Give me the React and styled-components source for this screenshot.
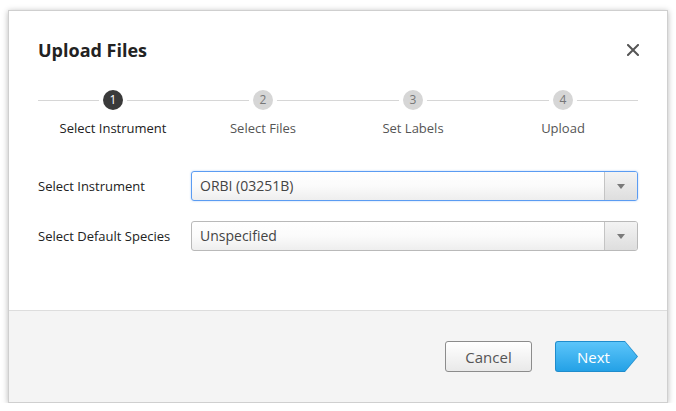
import React from "react";
import styled, { createGlobalStyle } from "styled-components";

const Global = createGlobalStyle`
  html, body { margin: 0; padding: 0; background: #ffffff; }
  body { font-family: "Open Sans", "Noto Sans", sans-serif; color: #333; }
  * { box-sizing: border-box; }
`;

const Modal = styled.div`
  margin: 10px 0 0 8px;
  width: 660px;
  height: 393px;
  background: #fff;
  border: 1px solid #cfcfcf;
  box-shadow: 0 1px 6px rgba(0, 0, 0, 0.28);
  display: flex;
  flex-direction: column;
`;

const Body = styled.div`
  flex: 1;
  padding: 27px 29px 0 29px;
`;

const Header = styled.div`
  display: flex;
  align-items: center;
  justify-content: space-between;
  height: 24px;
`;

const Title = styled.h1`
  margin: 0;
  font-size: 18px;
  line-height: 24px;
  font-weight: 700;
  color: #222;
`;

const Close = styled.button`
  border: 0;
  background: none;
  padding: 0;
  margin-right: -2px;
  width: 14px;
  height: 14px;
  display: flex;
  align-items: center;
  justify-content: center;
  cursor: pointer;
`;

const Steps = styled.div`
  position: relative;
  margin-top: 28px;
  display: grid;
  grid-template-columns: repeat(4, 150px);
  &::before {
    content: "";
    position: absolute;
    left: 0;
    right: 0;
    top: 10px;
    height: 1px;
    background: #d6d6d6;
  }
`;

const Step = styled.div`
  display: flex;
  flex-direction: column;
  align-items: center;
  position: relative;
`;

const Circle = styled.div`
  width: 20px;
  height: 20px;
  border-radius: 50%;
  background: ${(p) => (p.$active ? "#3a3a3a" : "#d6d6d6")};
  color: ${(p) => (p.$active ? "#fff" : "#777")};
  box-shadow: 0 0 0 4px #fff;
  font-size: 12px;
  line-height: 20px;
  text-align: center;
`;

const StepLabel = styled.div`
  margin-top: 9px;
  font-size: 13px;
  line-height: 18px;
  color: ${(p) => (p.$active ? "#222" : "#555")};
`;

const Form = styled.div`
  margin-top: 34px;
  display: flex;
  flex-direction: column;
  gap: 20px;
`;

const Row = styled.div`
  display: grid;
  grid-template-columns: 153px 447px;
  align-items: center;
`;

const Label = styled.label`
  font-size: 13px;
  color: #222;
`;

const Select = styled.div`
  height: 30px;
  border: 1px solid ${(p) => (p.$focus ? "#5b9cf2" : "#b9b9b9")};
  border-radius: 3px;
  background: linear-gradient(#ffffff 0%, #fbfbfb 50%, #eeeeee 100%);
  display: flex;
  align-items: stretch;
  ${(p) => (p.$focus ? "box-shadow: 0 0 2px rgba(91,156,242,0.5);" : "")}
`;

const SelectValue = styled.div`
  flex: 1;
  padding-left: 8px;
  font-size: 14px;
  line-height: 28px;
  color: #444;
`;

const Arrow = styled.div`
  width: 33px;
  border-left: 1px solid #c4c4c4;
  background: linear-gradient(#f3f3f3, #dedede);
  border-radius: 0 2px 2px 0;
  display: flex;
  align-items: center;
  justify-content: center;
`;

const Footer = styled.div`
  height: 92px;
  border-top: 1px solid #dddddd;
  background: #f4f4f4;
  display: flex;
  justify-content: flex-end;
  align-items: flex-start;
  gap: 23px;
  padding: 30px 29px 0 0;
`;

const CancelButton = styled.button`
  width: 87px;
  height: 31px;
  border: 1px solid #8c8c8c;
  border-radius: 3px;
  background: linear-gradient(#ffffff, #e9e9e9);
  font-family: inherit;
  font-size: 15px;
  color: #555;
  padding: 0;
`;

const NextOuter = styled.button`
  width: 83px;
  height: 31px;
  padding: 1px;
  border: 0;
  border-radius: 3px 0 0 3px;
  background: #1f8ccc;
  clip-path: polygon(0 0, 70px 0, 83px 50%, 70px 100%, 0 100%);
  font-family: inherit;
  cursor: pointer;
`;

const NextInner = styled.span`
  display: flex;
  align-items: center;
  width: 81px;
  height: 29px;
  padding-left: 21px;
  border-radius: 2px 0 0 2px;
  background: linear-gradient(#5cc5fa, #24a1e6);
  clip-path: polygon(0 0, 69px 0, 81px 50%, 69px 100%, 0 100%);
  color: #fff;
  font-size: 15px;
`;

const steps = ["Select Instrument", "Select Files", "Set Labels", "Upload"];

export default function App() {
  return (
    <>
      <Global />
      <Modal>
        <Body>
          <Header>
            <Title>Upload Files</Title>
            <Close aria-label="close">
              <svg width="12" height="12" viewBox="0 0 12 12">
                <path d="M1 1 L11 11 M11 1 L1 11" stroke="#555" strokeWidth="2" strokeLinecap="square" />
              </svg>
            </Close>
          </Header>
          <Steps>
            {steps.map((s, i) => (
              <Step key={s}>
                <Circle $active={i === 0}>{i + 1}</Circle>
                <StepLabel $active={i === 0}>{s}</StepLabel>
              </Step>
            ))}
          </Steps>
          <Form>
            <Row>
              <Label>Select Instrument</Label>
              <Select $focus>
                <SelectValue>ORBI (03251B)</SelectValue>
                <Arrow>
                  <svg width="8" height="5" viewBox="0 0 8 5">
                    <path d="M0 0 H8 L4 5 Z" fill="#7a7a7a" />
                  </svg>
                </Arrow>
              </Select>
            </Row>
            <Row>
              <Label>Select Default Species</Label>
              <Select>
                <SelectValue>Unspecified</SelectValue>
                <Arrow>
                  <svg width="8" height="5" viewBox="0 0 8 5">
                    <path d="M0 0 H8 L4 5 Z" fill="#7a7a7a" />
                  </svg>
                </Arrow>
              </Select>
            </Row>
          </Form>
        </Body>
        <Footer>
          <CancelButton>Cancel</CancelButton>
          <NextOuter>
            <NextInner>Next</NextInner>
          </NextOuter>
        </Footer>
      </Modal>
    </>
  );
}
